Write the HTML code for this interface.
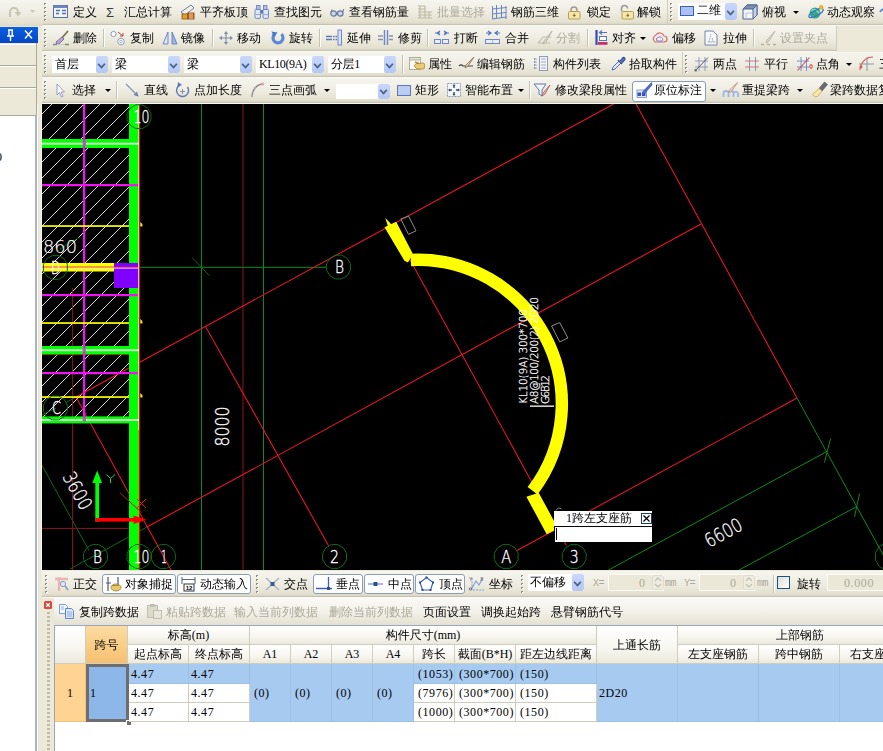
<!DOCTYPE html>
<html lang="zh-CN"><head><meta charset="utf-8"><title>梁原位标注</title>
<style>
html,body{margin:0;padding:0}
body{width:883px;height:751px;overflow:hidden;position:relative;background:#ece9d8;font-family:"Liberation Sans","WenQuanYi Zen Hei","Noto Sans CJK SC",sans-serif;font-size:12px;color:#000}
.a{position:absolute}
.tb{position:absolute;left:42px;height:24px;background:linear-gradient(#f6f5ee,#efede2 50%,#e4e1d1 90%,#dad6c5);border-bottom:1px solid #c6c3b2;box-shadow:0 1px 0 #f8f7f1,1px 0 0 #cfccbb}
.t{position:absolute;white-space:nowrap;line-height:14px;height:14px;font-size:12px}
.g{color:#aca899}
.grip{position:absolute;width:3px;height:18px;background:repeating-linear-gradient(#fff 0,#fff 1px,transparent 1px,transparent 4px),repeating-linear-gradient(#8f8d7c 0,#8f8d7c 2px,transparent 2px,transparent 4px);background-position:1px 1px,0 0;background-repeat:no-repeat;background-size:2px 100%,2px 100%}
.sep{position:absolute;width:1px;height:18px;background:#c5c2b2;box-shadow:1px 0 0 #fff}
.cb{position:absolute;background:#fff;height:17px}
.cb .t{top:1px;left:3px}
.dd{position:absolute;right:0;top:0;width:12px;height:100%;background:linear-gradient(#c9d7fb,#b4c8f6);border-radius:2px}
.dd:after{content:"";position:absolute;left:2px;top:5px;width:5px;height:5px;border-right:2px solid #4d6185;border-bottom:2px solid #4d6185;transform:rotate(45deg) scale(.8);transform-origin:50% 50%}
.short+.dd:after{top:3px}
.arr{position:absolute;width:0;height:0;border-left:3px solid transparent;border-right:3px solid transparent;border-top:3px solid #000}
.btn{position:absolute;background:#fff;border:1px solid #8a9db8;border-radius:3px;box-sizing:border-box}
svg{position:absolute;overflow:visible}
.lat{font-family:"Liberation Serif","WenQuanYi Zen Hei",serif}
.num{letter-spacing:.55px}
.mo{font-family:"Liberation Mono",monospace;font-size:10px;letter-spacing:-.4px}
.cb .lat{letter-spacing:-.4px}
</style></head><body>
<!-- toolbars -->
<div class="tb" style="left:42px;top:0px;width:625px"></div>
<div class="tb" style="left:668px;top:0px;width:215px"></div>
<div class="tb" style="left:42px;top:26px;width:794px"></div>
<div class="tb" style="left:42px;top:52px;width:640px"></div>
<div class="tb" style="left:683px;top:52px;width:200px"></div>
<div class="tb" style="left:42px;top:78px;width:841px"></div>
<i class="grip" style="left:44px;top:3px"></i>
<svg class="a" style="left:53px;top:4px" width="16" height="16" viewBox="0 0 16 16"><rect x=".5" y="1.5" width="14" height="12" fill="#eef2fb" stroke="#5b6fa3"/><rect x=".5" y="1.5" width="14" height="2.5" fill="#6f85c2"/><path d="M3 6.5h4M3 9.5h3M9 6.5h4M9 9.5h4" stroke="#5b6fa3" stroke-width="1.6" fill="none"/></svg>
<span class="t " style="left:73px;top:5px">定义</span>
<span class="t " style="left:106px;top:5px;font:13px 'Liberation Sans',sans-serif;top:5px;color:#3c3c3c">Σ</span>
<span class="t " style="left:124px;top:5px">汇总计算</span>
<svg class="a" style="left:180px;top:4px" width="16" height="16" viewBox="0 0 16 16"><path d="M1 8 L11 1 L14 4 L5 11Z" fill="#f4f0e6" stroke="#6b7fa8"/><rect x="2" y="10" width="6" height="5" fill="#e0a12c" stroke="#8a5a10" stroke-width=".8"/><rect x="8" y="9" width="6" height="6" fill="#c9722a" stroke="#7a3d10" stroke-width=".8"/><path d="M10 9v6M12 9v6" stroke="#f6d9a8" stroke-width=".8"/></svg>
<span class="t " style="left:200px;top:5px">平齐板顶</span>
<svg class="a" style="left:254px;top:4px" width="16" height="16" viewBox="0 0 16 16"><rect x="1" y="5" width="5.5" height="9.5" rx="1.5" fill="#dde6f6" stroke="#6c82b8" stroke-width=".9"/><rect x="9" y="5" width="5.5" height="9.5" rx="1.5" fill="#dde6f6" stroke="#6c82b8" stroke-width=".9"/><rect x="2.6" y="1.5" width="3.4" height="4" fill="#b4c4e6" stroke="#6c82b8" stroke-width=".9"/><rect x="9.5" y="1.5" width="3.4" height="4" fill="#b4c4e6" stroke="#6c82b8" stroke-width=".9"/><rect x="6.5" y="6" width="2.5" height="3.5" fill="#5f78b4"/><path d="M1.5 10.5h4.5M9.5 10.5h4.5" stroke="#8fa4d4" stroke-width=".9"/></svg>
<span class="t " style="left:274px;top:5px">查找图元</span>
<svg class="a" style="left:330px;top:4px" width="16" height="16" viewBox="0 0 16 16"><ellipse cx="3.6" cy="9.5" rx="2.8" ry="2.6" fill="#cdd8ee" stroke="#66789c" stroke-width="1.2"/><ellipse cx="10.2" cy="9.5" rx="2.8" ry="2.6" fill="#cdd8ee" stroke="#66789c" stroke-width="1.2"/><path d="M6.2 9q.7-.8 1.4 0M1 8 L2 5.5M12.8 8 L13.8 5" stroke="#66789c" fill="none"/></svg>
<span class="t " style="left:349px;top:5px">查看钢筋量</span>
<svg class="a" style="left:417px;top:4px" width="16" height="16" viewBox="0 0 16 16"><path d="M1 2h7M1 5h7M1 8h14M1 11h14M1 14h14M3 2v12M8 2v12M12 8v6" stroke="#bdb9a8" stroke-width="1.2" fill="none"/></svg>
<span class="t g" style="left:437px;top:5px">批量选择</span>
<svg class="a" style="left:491px;top:4px" width="16" height="16" viewBox="0 0 16 16"><path d="M1.5 2v13M5.5 1v13M10.5 1v13M15 2v13M1 5 L15.5 3.5M1 10 L15.5 8.5M1 15 L15.5 13" stroke="#6c84c4" stroke-width="1" fill="none"/></svg>
<span class="t " style="left:511px;top:5px">钢筋三维</span>
<svg class="a" style="left:567px;top:4px" width="16" height="16" viewBox="0 0 16 16"><path d="M4 8.5V6a3 3 0 0 1 6 0v2.5" fill="none" stroke="#9a9a9a" stroke-width="1.5"/><rect x="1.5" y="7.5" width="11.5" height="7.5" rx="1" fill="#f5e6ab" stroke="#b89c50"/><path d="M7.2 9.5v3.5M5.8 11.5h2.8" stroke="#8a6a20" stroke-width="1"/></svg>
<span class="t " style="left:587px;top:5px">锁定</span>
<svg class="a" style="left:619px;top:4px" width="16" height="16" viewBox="0 0 16 16"><path d="M2.5 7.5V4.5a3 3 0 0 1 6 0" fill="none" stroke="#9a9a9a" stroke-width="1.5"/><rect x="3" y="7.5" width="11.5" height="7.5" rx="1" fill="#f5e6ab" stroke="#b89c50"/><path d="M8.8 9.5v3.5M7.4 11.5h2.8" stroke="#8a6a20" stroke-width="1"/></svg>
<span class="t " style="left:637px;top:5px">解锁</span>
<i class="grip" style="left:670px;top:3px"></i>
<div class="cb" style="left:678px;top:3px;width:59px;height:17px"><svg class="a" style="left:2px;top:3px" width="14" height="10" viewBox="0 0 14 10"><rect x=".5" y=".5" width="13" height="9" fill="#a9c1f3" stroke="#3f5fb0"/></svg><span class="t" style="left:19px;top:0">二维</span><i class="dd"></i></div>
<svg class="a" style="left:742px;top:4px" width="16" height="16" viewBox="0 0 16 16"><path d="M1 5 L5 1 H15 V11 L11 15 H1Z" fill="#f3f6fb" stroke="#50648f"/><path d="M1 5 L5 1 H15 L11 5Z" fill="#7d8fb3" stroke="#50648f"/><path d="M11 5 L15 1V11L11 15Z" fill="#c3d1ec" stroke="#50648f"/><path d="M4 15V9H11" fill="none" stroke="#aab8d6" stroke-width=".8"/></svg>
<span class="t " style="left:762px;top:5px">俯视</span>
<i class="arr" style="left:793px;top:11px"></i>
<svg class="a" style="left:808px;top:4px" width="16" height="16" viewBox="0 0 16 16"><circle cx="7" cy="9" r="5.5" fill="#36a888"/><path d="M3 7q3-3 6 0t3 3" stroke="#8fe0b8" fill="none" stroke-width="1.4"/><ellipse cx="8" cy="9" rx="8" ry="2.6" fill="none" stroke="#3b6fd0" stroke-width="1.3" transform="rotate(-28 8 9)"/><circle cx="13.2" cy="3.2" r="2.2" fill="#f0b030"/></svg>
<span class="t " style="left:827px;top:5px">动态观察</span>
<svg class="a" style="left:880px;top:4px" width="16" height="16" viewBox="0 0 16 16"><path d="M0 8 Q4 2 8 8" stroke="#5c88d8" stroke-width="2" fill="none"/></svg>
<i class="grip" style="left:44px;top:29px"></i>
<svg class="a" style="left:53px;top:30px" width="16" height="16" viewBox="0 0 16 16"><path d="M15 1 L8 9" stroke="#7a6a4a" stroke-width="1.6"/><path d="M9 7 L11 9 L6 14 Q3 15 3 12Z" fill="#b9a6d8" stroke="#6a5a8a" stroke-width=".8"/><path d="M0 14.5h4M12 14.5h4" stroke="#7b8f7b" stroke-width="1.6"/><path d="M4 14.5h8" stroke="#c9c9c9" stroke-width="1"/></svg>
<span class="t " style="left:73px;top:31px">删除</span>
<i class="sep" style="left:103px;top:29px"></i>
<svg class="a" style="left:110px;top:30px" width="16" height="16" viewBox="0 0 16 16"><circle cx="3.5" cy="4" r="2.6" fill="#fff" stroke="#8a9ab8"/><circle cx="11" cy="11.5" r="3.3" fill="#fff" stroke="#8a9ab8"/><circle cx="11" cy="11.5" r="1.3" fill="none" stroke="#8a9ab8" stroke-width=".8"/><path d="M8 2 L13 6M13 6v-3M13 6h-3" stroke="#b44" stroke-width="1" fill="none"/></svg>
<span class="t " style="left:130px;top:31px">复制</span>
<svg class="a" style="left:162px;top:30px" width="16" height="16" viewBox="0 0 16 16"><path d="M6 2 L6 14 L1 14Z" fill="#dfe6f7" stroke="#6f86c8"/><path d="M10 2 L10 14 L15 14Z" fill="#9fb3e6" stroke="#6f86c8"/></svg>
<span class="t " style="left:181px;top:31px">镜像</span>
<i class="sep" style="left:212px;top:29px"></i>
<svg class="a" style="left:219px;top:31px" width="16" height="16" viewBox="0 0 16 16"><path d="M7 1v12M1 7h12" stroke="#8292ac" stroke-width="1.2" fill="none"/><path d="M7 0l-2.2 3h4.4zM7 14l-2.2-3h4.4zM0 7l3-2.2v4.4zM14 7l-3-2.2v4.4z" fill="#8292ac"/></svg>
<span class="t " style="left:237px;top:31px">移动</span>
<svg class="a" style="left:271px;top:31px" width="16" height="16" viewBox="0 0 16 16"><path d="M3.6 3.2 A5 5 0 1 0 10.4 3.2" fill="none" stroke="#5c88d8" stroke-width="3.2"/><path d="M.5 .5 L6.5 1.5 L3 6.5Z" fill="#4a78d0"/></svg>
<span class="t " style="left:289px;top:31px">旋转</span>
<i class="sep" style="left:319px;top:29px"></i>
<svg class="a" style="left:326px;top:30px" width="16" height="16" viewBox="0 0 16 16"><rect x="12" y="0" width="3.5" height="15" fill="#dbe4f7" stroke="#6f86c8"/><path d="M0 6.5h6M0 9.5h6" stroke="#5f78b4" stroke-width="1.3"/><path d="M7 6.5h4M7 9.5h4" stroke="#5f78b4" stroke-width="1.3" stroke-dasharray="1.5 1"/></svg>
<span class="t " style="left:347px;top:31px">延伸</span>
<svg class="a" style="left:378px;top:30px" width="16" height="16" viewBox="0 0 16 16"><path d="M0 6h5M0 9.5h5M11 6h4M11 9.5h4" stroke="#8a93a6" stroke-width="1.4"/><path d="M6.5 0v15M9.5 0v15" stroke="#6f86c8" stroke-width="1.4"/></svg>
<span class="t " style="left:398px;top:31px">修剪</span>
<i class="sep" style="left:427px;top:29px"></i>
<svg class="a" style="left:434px;top:30px" width="16" height="16" viewBox="0 0 16 16"><path d="M1 3h5M10 3h5M6 1l-3 2 3 2M10 1l3 2-3 2" stroke="#4f74c8" stroke-width="1.2" fill="none"/><rect x=".5" y="9.5" width="6" height="4" fill="#e8edf9" stroke="#6f86c8"/><rect x="8.5" y="9.5" width="6" height="4" fill="#e8edf9" stroke="#6f86c8"/></svg>
<span class="t " style="left:454px;top:31px">打断</span>
<svg class="a" style="left:485px;top:30px" width="16" height="16" viewBox="0 0 16 16"><path d="M1 3h4M11 3h4M3 1l3 2-3 2M13 1l-3 2 3 2" stroke="#4f74c8" stroke-width="1.2" fill="none"/><rect x=".5" y="9.5" width="14" height="4" fill="#e8edf9" stroke="#6f86c8"/><path d="M7.5 9.5v4" stroke="#6f86c8" stroke-dasharray="1 1"/></svg>
<span class="t " style="left:505px;top:31px">合并</span>
<svg class="a" style="left:537px;top:30px" width="16" height="16" viewBox="0 0 16 16"><path d="M1 13 L6 7H14M1 13h12" stroke="#bdb9a8" fill="none" stroke-width="1.1"/><path d="M15 1 L7 11 L6 14 L9 12Z" fill="#d8d5c8" stroke="#b5b1a0" stroke-width=".8"/></svg>
<span class="t g" style="left:556px;top:31px">分割</span>
<i class="sep" style="left:587px;top:29px"></i>
<svg class="a" style="left:595px;top:30px" width="16" height="16" viewBox="0 0 16 16"><path d="M1.5 0v15" stroke="#3a48a8" stroke-width="2.2"/><path d="M12 2.5H5M7 .5l-2.5 2 2.5 2" stroke="#4f74c8" stroke-width="1.2" fill="none"/><rect x="4.5" y="6.5" width="7" height="4" fill="#fff" stroke="#4f74c8"/><rect x="3" y="12" width="9.5" height="2.8" fill="#c8306a"/></svg>
<span class="t " style="left:612px;top:31px">对齐</span>
<i class="arr" style="left:640px;top:37px"></i>
<svg class="a" style="left:652px;top:30px" width="16" height="16" viewBox="0 0 16 16"><path d="M3 12 a4 4 0 0 1 1-7 a4.5 4.5 0 0 1 8 1 a3 3 0 0 1 0 6Z" fill="#fbeaea" stroke="#d46a6a" stroke-width="1.2"/><path d="M5 11 a2 2 0 0 1 1-3.4 a2.5 2.5 0 0 1 4 .6 a1.6 1.6 0 0 1 0 2.8Z" fill="none" stroke="#6f86c8" stroke-width="1"/></svg>
<span class="t " style="left:672px;top:31px">偏移</span>
<svg class="a" style="left:704px;top:30px" width="16" height="16" viewBox="0 0 16 16"><path d="M1 1h8l4 4v10H1Z" fill="#f6f8fc" stroke="#6f86a8"/><path d="M5 12l2-8M9 12l-1-5M4 12h8" stroke="#8a93a6" stroke-width=".9" fill="none" stroke-dasharray="1.5 1"/></svg>
<span class="t " style="left:723px;top:31px">拉伸</span>
<i class="sep" style="left:753px;top:29px"></i>
<svg class="a" style="left:761px;top:30px" width="16" height="16" viewBox="0 0 16 16"><path d="M14 1 L6 10 L5 13 L8 11Z" fill="#d8d5c8" stroke="#b5b1a0" stroke-width=".8"/><path d="M0 14.5h3M6 14.5h3M12 14.5h3" stroke="#b5b1a0" stroke-width="1.6"/></svg>
<span class="t g" style="left:780px;top:31px">设置夹点</span>
<i class="grip" style="left:44px;top:55px"></i>
<div class="cb" style="left:52px;top:56px;width:56px;height:17px"><span class="t ">首层</span><i class="dd"></i></div>
<div class="cb" style="left:112px;top:56px;width:68px;height:17px"><span class="t ">梁</span><i class="dd"></i></div>
<div class="cb" style="left:184px;top:56px;width:68px;height:17px"><span class="t ">梁</span><i class="dd"></i></div>
<div class="cb" style="left:256px;top:56px;width:68px;height:17px"><span class="t lat">KL10(9A)</span><i class="dd"></i></div>
<div class="cb" style="left:328px;top:56px;width:68px;height:17px"><span class="t lat">分层1</span><i class="dd"></i></div>
<i class="sep" style="left:402px;top:55px"></i>
<svg class="a" style="left:409px;top:56px" width="16" height="16" viewBox="0 0 16 16"><rect x=".5" y="1.5" width="11" height="12" fill="#fdfdfb" stroke="#b0ad9c"/><rect x=".5" y="1.5" width="11" height="2.5" fill="#e6e3d6" stroke="#b0ad9c"/><path d="M5 10 q2-4 5-2.5 l4-.5 q1.5 0 1.5 1.5 v3 q0 1.5-1.5 1.5 h-6Z" fill="#ecca72" stroke="#a88a3a" stroke-width=".8"/><path d="M10 7.5 L6 6" stroke="#a88a3a" stroke-width="1.4"/></svg>
<span class="t " style="left:428px;top:57px">属性</span>
<svg class="a" style="left:459px;top:56px" width="16" height="16" viewBox="0 0 16 16"><path d="M0 10 q2-2 4 0 h10" stroke="#444" fill="none" stroke-width="1.2"/><path d="M15 1 L7 9 L6 12 L9 10Z" fill="#e9d7b0" stroke="#7a6a4a" stroke-width=".8"/></svg>
<span class="t " style="left:477px;top:57px">编辑钢筋</span>
<svg class="a" style="left:534px;top:56px" width="16" height="16" viewBox="0 0 16 16"><rect x="5.5" y=".5" width="8" height="14" fill="#f4f6fb" stroke="#8a9ab8"/><path d="M7 3h5M7 6h5M7 9h5M7 12h5" stroke="#9aa6c0"/><path d="M0 3h3M0 6h3M0 9h3M0 12h3" stroke="#5f78b4" stroke-width="1.6" stroke-dasharray="1.5 1.2"/></svg>
<span class="t " style="left:553px;top:57px">构件列表</span>
<svg class="a" style="left:610px;top:56px" width="16" height="16" viewBox="0 0 16 16"><path d="M2 14 L3 11 L9 5 L11 7 L5 13Z" fill="#dfe8fb" stroke="#3f5fb0" stroke-width=".9"/><path d="M8 4 L12 8M10 5 L13 1.5 a1.6 1.6 0 0 1 2 2 L12 7" fill="#4f74c8" stroke="#2f4c8f" stroke-width="1.1"/></svg>
<span class="t " style="left:629px;top:57px">拾取构件</span>
<i class="grip" style="left:685px;top:55px"></i>
<svg class="a" style="left:694px;top:56px" width="16" height="16" viewBox="0 0 16 16"><path d="M1 5h13M1 11h13M5 1v14M11 1v14" stroke="#8494bc" stroke-width=".9"/><path d="M1.5 14.5 L14 1.5" stroke="#5a5a5a" stroke-width="1"/><rect x=".5" y="13" width="2.4" height="2.4" fill="#6a6a6a"/></svg>
<span class="t " style="left:713px;top:57px">两点</span>
<svg class="a" style="left:745px;top:56px" width="16" height="16" viewBox="0 0 16 16"><path d="M0 5h14M0 11h14" stroke="#d87878" stroke-width="1.1"/><path d="M4.5 1v14M10.5 1v14" stroke="#8494bc" stroke-width="1"/></svg>
<span class="t " style="left:764px;top:57px">平行</span>
<svg class="a" style="left:797px;top:56px" width="16" height="16" viewBox="0 0 16 16"><path d="M0 5h12M0 11h12M4 1v14M9.5 1v14" stroke="#6f86c8" stroke-width=".9"/><path d="M.5 14.5 L12.5 1.5" stroke="#c0504d" stroke-width="1.1"/><ellipse cx="14" cy="10.5" rx="1.3" ry="1.8" fill="none" stroke="#d9363a" stroke-width="1"/></svg>
<span class="t " style="left:816px;top:57px">点角</span>
<i class="arr" style="left:846px;top:63px"></i>
<svg class="a" style="left:859px;top:56px" width="16" height="16" viewBox="0 0 16 16"><path d="M1 14 A13 13 0 0 1 14 1" stroke="#d9534f" stroke-width="1.2" fill="none"/><path d="M0 8h15M8 1v14" stroke="#8a93a6" stroke-width="1"/><circle cx="2" cy="11" r="1.4" fill="#d9534f"/></svg>
<span class="t " style="left:879px;top:57px">三</span>
<i class="grip" style="left:44px;top:81px"></i>
<svg class="a" style="left:56px;top:83px" width="16" height="16" viewBox="0 0 16 16"><path d="M1 1 L1 12 L3.5 9.5 L5.5 14 L7 13.2 L5 9 L8.5 9Z" fill="#fff" stroke="#8a93c0" stroke-width=".9"/></svg>
<span class="t " style="left:72px;top:83px">选择</span>
<i class="arr" style="left:105px;top:89px"></i>
<i class="sep" style="left:116px;top:81px"></i>
<svg class="a" style="left:125px;top:83px" width="16" height="16" viewBox="0 0 16 16"><path d="M1 1 L13 13" stroke="#7f92b8" stroke-width="1.1"/><path d="M13.5 13.5 L8.5 12 L12 8.5Z" fill="#6f84b0"/></svg>
<span class="t " style="left:144px;top:83px">直线</span>
<svg class="a" style="left:175px;top:82px" width="16" height="16" viewBox="0 0 16 16"><path d="M12.5 5 A6 6 0 1 1 5 3" fill="none" stroke="#5f78b4" stroke-width="1.4"/><path d="M3 0 L7 3 L2.5 5Z" fill="#5f78b4"/><path d="M5 9.5h5M7.5 7v5" stroke="#8a93a6" stroke-width="1.1"/></svg>
<span class="t " style="left:194px;top:83px">点加长度</span>
<svg class="a" style="left:250px;top:82px" width="16" height="16" viewBox="0 0 16 16"><path d="M2 14 Q3 4 12 2" fill="none" stroke="#8a8a8a" stroke-width="1.3"/><circle cx="2" cy="14" r="1.2" fill="#b0b0b0"/><circle cx="5" cy="6" r="1.2" fill="#b0b0b0"/><circle cx="12.5" cy="2" r="1.6" fill="#e0a0a0"/></svg>
<span class="t " style="left:269px;top:83px">三点画弧</span>
<i class="arr" style="left:324px;top:89px"></i>
<div class="cb" style="left:336px;top:84px;width:54px;height:15px"><span class="t short"></span><i class="dd"></i></div>
<svg class="a" style="left:397px;top:85px" width="16" height="16" viewBox="0 0 16 16"><rect x=".5" y=".5" width="13" height="10" fill="#bccdf3" stroke="#5f78b4"/></svg>
<span class="t " style="left:415px;top:83px">矩形</span>
<svg class="a" style="left:447px;top:83px" width="16" height="16" viewBox="0 0 16 16"><rect x=".5" y=".5" width="13" height="13" fill="#f4f6fb" stroke="#8a9ab8" stroke-dasharray="2 1"/><path d="M7 2v3M7 9v3M2 7h3M9 7h3" stroke="#3b4a6a" stroke-width="1.4"/><path d="M7 1l-1.5 2h3zM7 13l-1.5-2h3zM1 7l2-1.5v3zM13 7l-2-1.5v3z" fill="#3b4a6a"/></svg>
<span class="t " style="left:465px;top:83px">智能布置</span>
<i class="arr" style="left:518px;top:89px"></i>
<i class="sep" style="left:529px;top:81px"></i>
<svg class="a" style="left:534px;top:82px" width="16" height="16" viewBox="0 0 16 16"><path d="M0 2h12l-4 6v6l-3-2V8Z" fill="#f4f6fb" stroke="#5f78b4" stroke-width="1"/><path d="M16 3 L9 11 L8 14 L11 12Z" fill="#e9b0b0" stroke="#a05050" stroke-width=".7"/></svg>
<span class="t " style="left:555px;top:83px">修改梁段属性</span>
<div class="btn" style="left:632px;top:81px;width:74px;height:21px"></div>
<svg class="a" style="left:636px;top:82px" width="16" height="16" viewBox="0 0 16 16"><rect x="1" y="8" width="9.5" height="7.5" fill="#dfe8fb" stroke="#6f86c8" stroke-width=".8"/><rect x="1.5" y="10.5" width="3.5" height="3.5" fill="#3a56b0"/><rect x="6" y="10.5" width="3.5" height="3.5" fill="#3a56b0"/><path d="M15.5 .5 L7 9.5 L6 12.5 L9 11 L16 3Z" fill="#4a6cd0" stroke="#2f4c9f" stroke-width=".6"/></svg>
<span class="t " style="left:654px;top:83px">原位标注</span>
<i class="arr" style="left:710px;top:89px"></i>
<svg class="a" style="left:722px;top:82px" width="16" height="16" viewBox="0 0 16 16"><path d="M1.5 15v-3.5a2.5 2.5 0 0 1 5 0v3.5M6.5 15v-3.5a2.5 2.5 0 0 1 5 0v3.5M11.5 15v-3.5a2.3 2.3 0 0 1 4.5 0v3.5" fill="none" stroke="#9ab6e6" stroke-width="1.8"/><path d="M15.5 .5 L7.5 8 L6.5 10.5 L9.5 9.5Z" fill="#ecd2c0" stroke="#b08870" stroke-width=".7"/></svg>
<span class="t " style="left:742px;top:83px">重提梁跨</span>
<i class="arr" style="left:797px;top:89px"></i>
<svg class="a" style="left:812px;top:82px" width="16" height="16" viewBox="0 0 16 16"><path d="M12.5 0 L15.5 2.5 L10 9 L7 6.5Z" fill="#6a6a78" stroke="#4a4a5a" stroke-width=".6"/><path d="M7 6.5 L10 9 L5.5 14.5 Q2 16 0.5 12.5Z" fill="#f6e9a8" stroke="#c0a850" stroke-width=".8"/></svg>
<span class="t " style="left:830px;top:83px">梁跨数据复制</span>
<!-- left panel -->
<div class="a" style="left:0;top:0;width:42px;height:26px;background:linear-gradient(#f6f5ee,#efede2 50%,#e4e1d1 90%,#dad6c5)"></div>
<svg class="a" style="left:7px;top:4px" width="30" height="16" viewBox="0 0 30 16"><path d="M3 13 V8 a4 4 0 0 1 8 0 v1" fill="none" stroke="#c9c6b6" stroke-width="2.2"/><path d="M7.5 8 L11 12.5 L14.5 8Z" fill="#c9c6b6"/><path d="M23 6h5l-2.5 3z" fill="#c9c6b6"/></svg>
<div class="a" style="left:0;top:26px;width:42px;height:725px;background:#ece9d8"></div>
<div class="a" style="left:0;top:27px;width:38px;height:16px;background:linear-gradient(#0a5fe0,#0347c8)"></div>
<svg class="a" style="left:6px;top:29px" width="28" height="12" viewBox="0 0 28 12"><path d="M2 1h5M3 1v6M6.2 1v6M1 7h7M4.5 7v5" stroke="#fff" stroke-width="1.4" fill="none"/><path d="M19 1.5 L26 9.5M26 1.5 L19 9.5" stroke="#fff" stroke-width="1.4"/></svg>
<div class="a" style="left:0;top:43px;width:36px;height:73px;background:#ece9d8"></div>
<div class="a" style="left:0;top:44px;width:36px;height:1px;background:#fff"></div>
<div class="a" style="left:0;top:65px;width:36px;height:1px;background:#aca899"></div>
<div class="a" style="left:0;top:66px;width:36px;height:1px;background:#fff"></div>
<div class="a" style="left:0;top:87px;width:36px;height:1px;background:#aca899"></div>
<div class="a" style="left:0;top:88px;width:36px;height:1px;background:#fff"></div>
<div class="a" style="left:0;top:115px;width:35px;height:636px;background:#fff;border-top:1px solid #aca899"></div>
<div class="a" style="left:36px;top:43px;width:1px;height:72px;background:#aca899"></div>
<div class="a" style="left:35px;top:115px;width:2px;height:636px;background:#a9b4c8"></div>
<span class="t lat" style="left:-4px;top:150px">0</span>
<div class="a" style="left:37px;top:104px;width:1px;height:647px;background:#fbfaf6"></div>
<div class="a" style="left:41px;top:104px;width:1px;height:467px;background:#f7f6ef"></div>
<!-- canvas -->
<svg class="a" style="left:42px;top:104px;overflow:hidden" width="841" height="466" viewBox="42 104 841 466" font-family="'DejaVu Sans','Liberation Sans',sans-serif" font-weight="200">
<defs><pattern id="hatch" patternUnits="userSpaceOnUse" x="0" y="0" width="16" height="16"><path d="M-1 13 L13 -1M11 17 L17 11" stroke="#ececec" stroke-width="0.95" fill="none"/></pattern></defs>
<rect x="42" y="104" width="841" height="466" fill="#000"/>
<rect x="42" y="104" width="87" height="313" fill="url(#hatch)"/>
<line x1="42" y1="465.4" x2="89" y2="550.5" stroke="#0a6a18" stroke-width="1" />
<line x1="147" y1="527" x2="70" y2="569" stroke="#0a6a18" stroke-width="1" />
<line x1="66" y1="402.5" x2="76" y2="397" stroke="#0a6a18" stroke-width="1" />
<line x1="42" y1="415" x2="56" y2="408" stroke="#0a6a18" stroke-width="1" />
<line x1="60" y1="249" x2="80" y2="237" stroke="#0a6a18" stroke-width="1" />
<line x1="72.6" y1="288" x2="72.6" y2="570" stroke="#8c1420" stroke-width="1" />
<line x1="243" y1="104" x2="243" y2="570" stroke="#8c1420" stroke-width="1" />
<line x1="42" y1="354.8" x2="138" y2="354.8" stroke="#8c1420" stroke-width="1" />
<line x1="42" y1="528.4" x2="140" y2="528.4" stroke="#8c1420" stroke-width="1" />
<line x1="201.5" y1="104" x2="201.5" y2="570" stroke="#0b8a1e" stroke-width="1" />
<line x1="263.5" y1="104" x2="263.5" y2="570" stroke="#0b8a1e" stroke-width="1" />
<line x1="140" y1="267.3" x2="326" y2="267.3" stroke="#0b8a1e" stroke-width="1" />
<line x1="192.5" y1="258" x2="209.4" y2="275.7" stroke="#0a6a18" stroke-width="1" />
<line x1="76" y1="397" x2="613.6" y2="104" stroke="#ee142c" stroke-width="1.05" />
<line x1="147" y1="527" x2="701" y2="224" stroke="#ee142c" stroke-width="1.05" />
<line x1="517" y1="550.5" x2="797" y2="398" stroke="#ee142c" stroke-width="1.05" />
<line x1="76" y1="397" x2="171" y2="570" stroke="#ee142c" stroke-width="1.05" />
<line x1="205.8" y1="327" x2="328.6" y2="545.7" stroke="#ee142c" stroke-width="1.05" />
<line x1="391.5" y1="226" x2="566.5" y2="545.4" stroke="#ee142c" stroke-width="1.05" />
<line x1="636" y1="104" x2="797" y2="398" stroke="#ee142c" stroke-width="1.05" />
<line x1="797" y1="398" x2="886" y2="560" stroke="#0b8a1e" stroke-width="1" />
<line x1="608.5" y1="570" x2="826" y2="452" stroke="#0b8a1e" stroke-width="1" />
<line x1="739" y1="570" x2="856.5" y2="506.7" stroke="#0b8a1e" stroke-width="1" />
<line x1="824.5" y1="462.5" x2="830.5" y2="438.5" stroke="#0b8a1e" stroke-width="1" />
<line x1="854.5" y1="517" x2="859.5" y2="493.5" stroke="#0b8a1e" stroke-width="1" />
<rect x="129" y="104" width="9.3" height="466" fill="#00ff00"/>
<rect x="42" y="139" width="87" height="9" fill="#00ff00"/>
<rect x="42" y="142.7" width="97" height="2" fill="#c9f2c9"/>
<rect x="42" y="346" width="87" height="8.399999999999977" fill="#00ff00"/>
<rect x="42" y="349.2" width="97" height="2" fill="#c9f2c9"/>
<rect x="42" y="416.4" width="87" height="7.0" fill="#00ff00"/>
<rect x="42" y="419" width="97" height="2" fill="#c9f2c9"/>
<rect x="83" y="104" width="2.2" height="315" fill="#f014f0"/>
<rect x="42" y="184" width="97" height="2.2" fill="#f014f0"/>
<rect x="42" y="294" width="97" height="2.2" fill="#f014f0"/>
<rect x="42" y="372" width="97" height="2.2" fill="#f014f0"/>
<rect x="82.5" y="141.5" width="3.5" height="4" fill="#b060b0"/>
<rect x="82.5" y="348" width="3.5" height="4" fill="#b060b0"/>
<rect x="82.5" y="417.5" width="3.5" height="4" fill="#b060b0"/>
<rect x="42" y="225.2" width="87" height="1.7" fill="#ffff00"/>
<path d="M140.2 222 L142.4 224 L142.4 226.4 L140.2 226.4Z" fill="#f4e43c"/>
<rect x="42" y="322.2" width="87" height="1.7" fill="#ffff00"/>
<path d="M140.2 319 L142.4 321 L142.4 323.4 L140.2 323.4Z" fill="#f4e43c"/>
<rect x="42" y="396.2" width="87" height="1.7" fill="#ffff00"/>
<path d="M140.2 393 L142.4 395 L142.4 397.4 L140.2 397.4Z" fill="#f4e43c"/>
<rect x="42" y="263" width="72" height="8.5" fill="#ffff00"/>
<rect x="114" y="263" width="24.5" height="25" fill="#8000ff"/>
<rect x="42" y="266.6" width="97" height="1" fill="#e01030"/>
<rect x="42" y="267.6" width="97" height="1" fill="#f8d8e8"/>
<rect x="138.2" y="104" width="1" height="326" fill="#f4f4c8"/>
<rect x="139.2" y="104" width="1" height="326" fill="#e81828"/>
<rect x="138.2" y="430" width="1.3" height="140" fill="#e0b400"/>
<rect x="139.5" y="430" width="0.7" height="140" fill="#901010"/>
<line x1="119.7" y1="492.5" x2="141.4" y2="512.5" stroke="#c81020" stroke-width="1" />
<line x1="137" y1="499" x2="146" y2="508" stroke="#ee142c" stroke-width="1" />
<line x1="146" y1="499" x2="137" y2="508" stroke="#ee142c" stroke-width="1" />
<rect x="95.3" y="482" width="3.8" height="39.5" fill="#00ff00"/>
<path d="M92.3 483 L97.2 470.5 L102 483Z" fill="#00ff00"/>
<rect x="95.3" y="518" width="39" height="3.6" fill="#ff0000"/>
<path d="M133.5 515.6 L146.5 519.8 L133.5 524Z" fill="#ff0000"/>
<path d="M106.5 474.5 L110.5 478.5 L115 474.5M110.5 478.5V483" stroke="#20d040" stroke-width="1" fill="none"/>
<polygon points="150.9,119.9 147.7,125.4 142.2,128.6 135.8,128.6 130.3,125.4 127.1,119.9 127.1,113.5 130.3,108.0 135.8,104.8 142.2,104.8 147.7,108.0 150.9,113.5" fill="none" stroke="#0c6a1c" stroke-width="1"/>
<text x="141.5" y="122.9" font-size="17" fill="#fff" stroke="#fff" stroke-width=".35" text-anchor="middle" textLength="16" lengthAdjust="spacingAndGlyphs">10</text>
<polygon points="67.3,270.7 64.1,276.2 58.6,279.4 52.2,279.4 46.7,276.2 43.5,270.7 43.5,264.3 46.7,258.8 52.2,255.6 58.6,255.6 64.1,258.8 67.3,264.3" fill="none" stroke="#0c6a1c" stroke-width="1"/>
<text x="55.4" y="273.7" font-size="17" fill="#fff" stroke="#fff" stroke-width=".35" text-anchor="middle" textLength="9" lengthAdjust="spacingAndGlyphs">D</text>
<polygon points="67.3,411.2 64.1,416.7 58.6,419.9 52.2,419.9 46.7,416.7 43.5,411.2 43.5,404.8 46.7,399.3 52.2,396.1 58.6,396.1 64.1,399.3 67.3,404.8" fill="none" stroke="#0c6a1c" stroke-width="1"/>
<text x="56.4" y="414.2" font-size="17" fill="#fff" stroke="#fff" stroke-width=".35" text-anchor="middle" textLength="9" lengthAdjust="spacingAndGlyphs">C</text>
<polygon points="350.4,270.2 347.2,275.7 341.7,278.9 335.3,278.9 329.8,275.7 326.6,270.2 326.6,263.8 329.8,258.3 335.3,255.1 341.7,255.1 347.2,258.3 350.4,263.8" fill="none" stroke="#0c6a1c" stroke-width="1"/>
<text x="339.5" y="273.2" font-size="17" fill="#fff" stroke="#fff" stroke-width=".35" text-anchor="middle" textLength="9" lengthAdjust="spacingAndGlyphs">B</text>
<polygon points="107.4,559.7 104.2,565.2 98.7,568.4 92.3,568.4 86.8,565.2 83.6,559.7 83.6,553.3 86.8,547.8 92.3,544.6 98.7,544.6 104.2,547.8 107.4,553.3" fill="none" stroke="#0c6a1c" stroke-width="1"/>
<text x="97.5" y="562.7" font-size="17" fill="#fff" stroke="#fff" stroke-width=".35" text-anchor="middle" textLength="9" lengthAdjust="spacingAndGlyphs">B</text>
<polygon points="150.9,559.7 147.7,565.2 142.2,568.4 135.8,568.4 130.3,565.2 127.1,559.7 127.1,553.3 130.3,547.8 135.8,544.6 142.2,544.6 147.7,547.8 150.9,553.3" fill="none" stroke="#0c6a1c" stroke-width="1"/>
<text x="141.5" y="562.7" font-size="17" fill="#fff" stroke="#fff" stroke-width=".35" text-anchor="middle" textLength="16" lengthAdjust="spacingAndGlyphs">10</text>
<polygon points="175.3,559.7 172.1,565.2 166.6,568.4 160.2,568.4 154.7,565.2 151.5,559.7 151.5,553.3 154.7,547.8 160.2,544.6 166.6,544.6 172.1,547.8 175.3,553.3" fill="none" stroke="#0c6a1c" stroke-width="1"/>
<text x="163.9" y="562.7" font-size="17" fill="#fff" stroke="#fff" stroke-width=".35" text-anchor="middle" textLength="6" lengthAdjust="spacingAndGlyphs">1</text>
<polygon points="346.5,559.7 343.3,565.2 337.8,568.4 331.4,568.4 325.9,565.2 322.7,559.7 322.7,553.3 325.9,547.8 331.4,544.6 337.8,544.6 343.3,547.8 346.5,553.3" fill="none" stroke="#0c6a1c" stroke-width="1"/>
<text x="334.6" y="562.7" font-size="17" fill="#fff" stroke="#fff" stroke-width=".35" text-anchor="middle" textLength="9" lengthAdjust="spacingAndGlyphs">2</text>
<polygon points="518.1,559.7 514.9,565.2 509.4,568.4 503.0,568.4 497.5,565.2 494.3,559.7 494.3,553.3 497.5,547.8 503.0,544.6 509.4,544.6 514.9,547.8 518.1,553.3" fill="none" stroke="#0c6a1c" stroke-width="1"/>
<text x="506.2" y="562.7" font-size="17" fill="#fff" stroke="#fff" stroke-width=".35" text-anchor="middle" textLength="10" lengthAdjust="spacingAndGlyphs">A</text>
<polygon points="586.1,559.7 582.9,565.2 577.4,568.4 571.0,568.4 565.5,565.2 562.3,559.7 562.3,553.3 565.5,547.8 571.0,544.6 577.4,544.6 582.9,547.8 586.1,553.3" fill="none" stroke="#0c6a1c" stroke-width="1"/>
<text x="574.2" y="562.7" font-size="17" fill="#fff" stroke="#fff" stroke-width=".35" text-anchor="middle" textLength="9" lengthAdjust="spacingAndGlyphs">3</text>
<polygon points="902.5,560.1 898.9,566.4 892.6,570.0 885.4,570.0 879.1,566.4 875.5,560.1 875.5,552.9 879.1,546.6 885.4,543.0 892.6,543.0 898.9,546.6 902.5,552.9" fill="none" stroke="#0c6a1c" stroke-width="1"/>
<text x="889" y="562.7" font-size="17" fill="#fff" stroke="#fff" stroke-width=".35" text-anchor="middle"></text>
<text x="43" y="253" font-size="18.5" fill="#fff" stroke="#fff" stroke-width=".15" textLength="34" lengthAdjust="spacingAndGlyphs">860</text>
<text transform="translate(228.5,446.5) rotate(-90)" font-size="19" fill="#fff" stroke="#fff" stroke-width=".3" textLength="40" lengthAdjust="spacingAndGlyphs">8000</text>
<text transform="translate(62,476.5) rotate(61)" font-size="19" fill="#fff" stroke="#fff" stroke-width=".3" textLength="40" lengthAdjust="spacingAndGlyphs">3600</text>
<text transform="translate(709,548) rotate(-28.6)" font-size="19" fill="#fff" stroke="#fff" stroke-width=".3" textLength="40" lengthAdjust="spacingAndGlyphs">6600</text>
<path d="M384.5 227.2 L396.2 221.7 L412.9 254 L408 262.5 L404.4 260.7Z" fill="#ffff00"/>
<path d="M385.2 217.8 L391.5 224.5 L388 226.5Z" fill="#ffff00"/>
<path d="M410.8 260 A144 144 0 0 1 532.6 490.8" fill="none" stroke="#ffff00" stroke-width="12.4"/>
<path d="M526.4 496.7 L538.7 492.7 L558 528.4 L546.7 534.3Z" fill="#ffff00"/>
<path d="M400.8 219 L408.5 216 L416 230.8 L408.5 234.4Z" fill="none" stroke="#8c8c8c" stroke-width="1"/>
<path d="M551.6 326 L559.7 322.5 L567.9 338 L559.7 341.9Z" fill="none" stroke="#8c8c8c" stroke-width="1"/>
<path d="M556 510.5 q2.5-4 5.5-1.5" fill="none" stroke="#8c8c8c" stroke-width="1"/>
<text transform="translate(527,404) rotate(-90)" font-size="10.5" fill="#fff" stroke="#fff" stroke-width=".25" textLength="95" lengthAdjust="spacing">KL10(9A) 300*700</text>
<text transform="translate(538,404) rotate(-90)" font-size="10.5" fill="#fff" stroke="#fff" stroke-width=".25" textLength="107" lengthAdjust="spacing">A8@100/200(2) 2D20</text>
<text transform="translate(549,404) rotate(-90)" font-size="10.5" fill="#fff" stroke="#fff" stroke-width=".25" textLength="29" lengthAdjust="spacing">G6B12</text>
<rect x="530" y="405.5" width="24" height="1.3" fill="#fff"/>
</svg>
<div class="a" style="left:554px;top:511px;width:98px;height:15px;background:#fff"></div>
<span class="t" style="left:566px;top:511px"><span class="lat">1</span>跨左支座筋</span>
<svg class="a" style="left:641px;top:513px" width="11" height="11" viewBox="0 0 11 11"><rect x=".5" y=".5" width="10" height="10" fill="#fff" stroke="#1a3a6a"/><path d="M2.5 2.5 L8.5 8.5M8.5 2.5 L2.5 8.5" stroke="#000" stroke-width="1.3"/></svg>
<div class="a" style="left:554px;top:526px;width:98px;height:16px;background:#fff;box-sizing:border-box;border-top:1px solid #000;border-left:1px solid #000"></div>
<div class="a" style="left:556px;top:528px;width:1px;height:12px;background:#000"></div>
<!-- snap bar -->
<div class="tb" style="left:42px;top:571px;width:841px;height:25px"></div>
<i class="grip" style="left:45px;top:575px"></i>
<svg class="a" style="left:54px;top:576px" width="16" height="16" viewBox="0 0 16 16"><path d="M1 3h13M5 1v14" stroke="#e9b4b4" stroke-width="2.4" fill="none"/><circle cx="9" cy="8" r="2.6" fill="#dfe8fb" stroke="#8a9ab8"/><path d="M11 10l3 4" stroke="#8a9ab8" stroke-width="1.6"/></svg>
<span class="t" style="left:73px;top:577px">正交</span>
<div class="btn" style="left:102px;top:574px;width:74px;height:20px"></div>
<svg class="a" style="left:106px;top:576px" width="16" height="16" viewBox="0 0 16 16"><path d="M2 1v14M12 1v10M0 7h5" stroke="#4a5a7a" stroke-width="1.2"/><ellipse cx="10" cy="11.5" rx="5" ry="3.5" fill="#e9c870" stroke="#9a7a2a" stroke-width=".8"/><path d="M6 9.5h7" stroke="#9a7a2a" stroke-width=".8"/></svg>
<span class="t" style="left:125px;top:577px">对象捕捉</span>
<div class="btn" style="left:177px;top:574px;width:74px;height:20px"></div>
<svg class="a" style="left:181px;top:576px" width="16" height="16" viewBox="0 0 16 16"><path d="M1 1v7M14 1v7M1 3.5h13" stroke="#5a6a8a" stroke-width="1.1" fill="none"/><rect x="3" y="8" width="10" height="7" fill="#fff" stroke="#333" stroke-width="1"/><text x="8" y="14" font-size="6" font-family="Liberation Sans,sans-serif" font-weight="bold" text-anchor="middle" fill="#000">12</text></svg>
<span class="t" style="left:200px;top:577px">动态输入</span>
<i class="grip" style="left:256px;top:575px"></i>
<svg class="a" style="left:265px;top:576px" width="16" height="16" viewBox="0 0 16 16"><path d="M1 2 L14 14M14 2 L1 14" stroke="#9fb0cc" stroke-width="1.2"/><rect x="5.5" y="6" width="4" height="4" fill="#3f5888"/></svg>
<span class="t" style="left:284px;top:577px">交点</span>
<div class="btn" style="left:313px;top:574px;width:50px;height:20px"></div>
<svg class="a" style="left:316px;top:576px" width="17" height="16" viewBox="0 0 17 16"><path d="M0 12.5h16M12.5 1v13" stroke="#3f5fc0" stroke-width="1.3"/><rect x="11" y="11" width="3" height="3" fill="#2f4c8f"/></svg>
<span class="t" style="left:336px;top:577px">垂点</span>
<div class="btn" style="left:364px;top:574px;width:50px;height:20px"></div>
<svg class="a" style="left:368px;top:576px" width="16" height="16" viewBox="0 0 16 16"><path d="M0 8h15" stroke="#6f8fd8" stroke-width="1.3"/><rect x="5.5" y="6" width="4" height="4" fill="#2f4c8f"/></svg>
<span class="t" style="left:388px;top:577px">中点</span>
<div class="btn" style="left:415px;top:574px;width:50px;height:20px"></div>
<svg class="a" style="left:419px;top:576px" width="16" height="16" viewBox="0 0 16 16"><path d="M7.5 1.5 L14 6.5 L11.5 14 H3.5 L1 6.5Z" fill="#fff" stroke="#3f5fc0" stroke-width="1.2"/><g fill="#2f4c8f"><rect x="6.5" y=".5" width="2" height="2"/><rect x="13" y="5.5" width="2" height="2"/><rect x="10.5" y="13" width="2" height="2"/><rect x="2.5" y="13" width="2" height="2"/><rect x="0" y="5.5" width="2" height="2"/></g></svg>
<span class="t" style="left:439px;top:577px">顶点</span>
<svg class="a" style="left:469px;top:576px" width="16" height="16" viewBox="0 0 16 16"><path d="M3 2v12h12" stroke="#7f9fd8" stroke-width="1.1" fill="none" stroke-dasharray="2 1.2"/><path d="M3 12 L7 5 L10 9 L14 2" stroke="#7f9fd8" stroke-width="1.2" fill="none"/><text x="0" y="5" font-size="5" fill="#445" font-family="Liberation Sans,sans-serif">Y</text><text x="11" y="5" font-size="5" fill="#445" font-family="Liberation Sans,sans-serif">X</text><circle cx="1.5" cy="13" r="1.2" fill="none" stroke="#445" stroke-width=".7"/></svg>
<span class="t" style="left:489px;top:577px">坐标</span>
<i class="grip" style="left:521px;top:575px"></i>
<div class="cb" style="left:528px;top:574px;width:56px;height:17px"><span class="t" style="left:2px;top:1px">不偏移</span><i class="dd"></i></div>
<span class="t g mo" style="left:593px;top:577px">X=</span>
<div class="a" style="left:608px;top:574px;width:56px;height:17px;box-sizing:border-box;border:1px solid #fbfaf6;background:#ebe8d7"></div>
<span class="t g lat" style="left:639px;top:576px">0</span>
<svg class="a" style="left:652px;top:575px" width="12" height="15" viewBox="0 0 12 15"><rect x=".5" y=".5" width="11" height="14" rx="2" fill="#efede2" stroke="#dedbcb"/><path d="M3 6l3-3 3 3M3 9l3 3 3-3" stroke="#c4c1b0" stroke-width="1.4" fill="none"/></svg>
<span class="t g mo" style="left:665px;top:577px">mm</span>
<span class="t g mo" style="left:684px;top:577px">Y=</span>
<div class="a" style="left:699px;top:574px;width:56px;height:17px;box-sizing:border-box;border:1px solid #fbfaf6;background:#ebe8d7"></div>
<span class="t g lat" style="left:730px;top:576px">0</span>
<svg class="a" style="left:743px;top:575px" width="12" height="15" viewBox="0 0 12 15"><rect x=".5" y=".5" width="11" height="14" rx="2" fill="#efede2" stroke="#dedbcb"/><path d="M3 6l3-3 3 3M3 9l3 3 3-3" stroke="#c4c1b0" stroke-width="1.4" fill="none"/></svg>
<span class="t g mo" style="left:757px;top:577px">mm</span>
<i class="sep" style="left:773px;top:575px"></i>
<div class="a" style="left:777px;top:576px;width:13px;height:13px;box-sizing:border-box;border:1px solid #1c5180;background:linear-gradient(135deg,#dcdcd7,#fff)"></div>
<span class="t" style="left:797px;top:577px">旋转</span>
<div class="a" style="left:827px;top:574px;width:60px;height:17px;box-sizing:border-box;border:1px solid #fbfaf6;background:#ebe8d7"></div>
<span class="t g lat" style="left:844px;top:576px;letter-spacing:.6px">0.000</span>
<!-- bottom panel -->
<div class="a" style="left:42px;top:597px;width:841px;height:154px;background:#ece9d8;border-top:1px solid #fbfaf6"></div>
<div class="a" style="left:54px;top:598px;width:829px;height:27px;background:linear-gradient(#fbfaf7,#f3f1e9 50%,#e4e1d2)"></div>
<svg class="a" style="left:44px;top:601px" width="8" height="8" viewBox="0 0 8 8"><rect width="8" height="8" rx="1.5" fill="#d9463a"/><path d="M2.2 2.2 L5.8 5.8M5.8 2.2 L2.2 5.8" stroke="#fff" stroke-width="1.3"/></svg>
<div class="a" style="left:47px;top:612px;width:3px;height:139px;background:repeating-linear-gradient(#8f8d7c 0,#8f8d7c 2px,transparent 2px,transparent 4px);opacity:.5"></div>
<svg class="a" style="left:59px;top:604px" width="16" height="15" viewBox="0 0 16 15"><path d="M.5 .5h6l2 2v7h-8z" fill="#f4f8ff" stroke="#7f9fd0"/><path d="M6.5 4.5h6l2 2v8h-8z" fill="#dbe8fb" stroke="#5f86c8"/><path d="M8 8h5M8 10h5M8 12h5M2 3h3M2 5h3" stroke="#7f9fd0" stroke-width=".8"/></svg>
<span class="t " style="left:79px;top:605px">复制跨数据</span>
<svg class="a" style="left:147px;top:604px" width="16" height="15" viewBox="0 0 16 15"><rect x=".5" y="1.5" width="10" height="12" fill="#dcdacd" stroke="#c2bfae"/><rect x="3" y="0" width="5" height="3" fill="#c2bfae"/><rect x="6.5" y="6.5" width="8" height="8" fill="#e9e7dc" stroke="#c2bfae"/></svg>
<span class="t g" style="left:166px;top:605px">粘贴跨数据</span>
<span class="t g" style="left:234px;top:605px">输入当前列数据</span>
<span class="t g" style="left:329px;top:605px">删除当前列数据</span>
<span class="t " style="left:423px;top:605px">页面设置</span>
<span class="t " style="left:481px;top:605px">调换起始跨</span>
<span class="t " style="left:551px;top:605px">悬臂钢筋代号</span>
<div class="a" style="left:54px;top:625px;width:829px;height:126px;background:#fff;border-top:1px solid #9aa7bd;border-left:1px solid #9aa7bd"></div>
<div class="a " style="left:55px;top:626px;width:31px;height:38px;background:linear-gradient(#ffffff,#f7f6f0 60%,#ebe9dd);box-sizing:border-box;border-right:1px solid #d0cdbd;border-bottom:1px solid #d0cdbd;line-height:38px;text-align:center;white-space:nowrap;overflow:hidden"></div>
<div class="a " style="left:86px;top:626px;width:42px;height:38px;background:linear-gradient(#fbdba4,#f9cd84 55%,#f6c071);box-sizing:border-box;border-right:1px solid #d0cdbd;border-bottom:1px solid #d0cdbd;line-height:38px;text-align:center;white-space:nowrap;overflow:hidden">跨号</div>
<div class="a " style="left:128px;top:626px;width:122px;height:19px;background:linear-gradient(#ffffff,#f7f6f0 60%,#ebe9dd);box-sizing:border-box;border-right:1px solid #d0cdbd;border-bottom:1px solid #d0cdbd;line-height:19px;text-align:center;white-space:nowrap;overflow:hidden">标高<span class="lat">(m)</span></div>
<div class="a " style="left:128px;top:645px;width:61px;height:19px;background:linear-gradient(#ffffff,#f7f6f0 60%,#ebe9dd);box-sizing:border-box;border-right:1px solid #d0cdbd;border-bottom:1px solid #d0cdbd;line-height:19px;text-align:center;white-space:nowrap;overflow:hidden">起点标高</div>
<div class="a " style="left:189px;top:645px;width:61px;height:19px;background:linear-gradient(#ffffff,#f7f6f0 60%,#ebe9dd);box-sizing:border-box;border-right:1px solid #d0cdbd;border-bottom:1px solid #d0cdbd;line-height:19px;text-align:center;white-space:nowrap;overflow:hidden">终点标高</div>
<div class="a " style="left:250px;top:626px;width:347px;height:19px;background:linear-gradient(#ffffff,#f7f6f0 60%,#ebe9dd);box-sizing:border-box;border-right:1px solid #d0cdbd;border-bottom:1px solid #d0cdbd;line-height:19px;text-align:center;white-space:nowrap;overflow:hidden">构件尺寸<span class="lat">(mm)</span></div>
<div class="a lat" style="left:250px;top:645px;width:41px;height:19px;background:linear-gradient(#ffffff,#f7f6f0 60%,#ebe9dd);box-sizing:border-box;border-right:1px solid #d0cdbd;border-bottom:1px solid #d0cdbd;line-height:19px;text-align:center;white-space:nowrap;overflow:hidden">A1</div>
<div class="a lat" style="left:291px;top:645px;width:41px;height:19px;background:linear-gradient(#ffffff,#f7f6f0 60%,#ebe9dd);box-sizing:border-box;border-right:1px solid #d0cdbd;border-bottom:1px solid #d0cdbd;line-height:19px;text-align:center;white-space:nowrap;overflow:hidden">A2</div>
<div class="a lat" style="left:332px;top:645px;width:41px;height:19px;background:linear-gradient(#ffffff,#f7f6f0 60%,#ebe9dd);box-sizing:border-box;border-right:1px solid #d0cdbd;border-bottom:1px solid #d0cdbd;line-height:19px;text-align:center;white-space:nowrap;overflow:hidden">A3</div>
<div class="a lat" style="left:373px;top:645px;width:41px;height:19px;background:linear-gradient(#ffffff,#f7f6f0 60%,#ebe9dd);box-sizing:border-box;border-right:1px solid #d0cdbd;border-bottom:1px solid #d0cdbd;line-height:19px;text-align:center;white-space:nowrap;overflow:hidden">A4</div>
<div class="a " style="left:414px;top:645px;width:41px;height:19px;background:linear-gradient(#ffffff,#f7f6f0 60%,#ebe9dd);box-sizing:border-box;border-right:1px solid #d0cdbd;border-bottom:1px solid #d0cdbd;line-height:19px;text-align:center;white-space:nowrap;overflow:hidden">跨长</div>
<div class="a " style="left:455px;top:645px;width:61px;height:19px;background:linear-gradient(#ffffff,#f7f6f0 60%,#ebe9dd);box-sizing:border-box;border-right:1px solid #d0cdbd;border-bottom:1px solid #d0cdbd;line-height:19px;text-align:center;white-space:nowrap;overflow:hidden">截面<span class="lat">(B*H)</span></div>
<div class="a " style="left:516px;top:645px;width:81px;height:19px;background:linear-gradient(#ffffff,#f7f6f0 60%,#ebe9dd);box-sizing:border-box;border-right:1px solid #d0cdbd;border-bottom:1px solid #d0cdbd;line-height:19px;text-align:center;white-space:nowrap;overflow:hidden">距左边线距离</div>
<div class="a " style="left:597px;top:626px;width:81px;height:38px;background:linear-gradient(#ffffff,#f7f6f0 60%,#ebe9dd);box-sizing:border-box;border-right:1px solid #d0cdbd;border-bottom:1px solid #d0cdbd;line-height:38px;text-align:center;white-space:nowrap;overflow:hidden">上通长筋</div>
<div class="a " style="left:678px;top:626px;width:243px;height:19px;background:linear-gradient(#ffffff,#f7f6f0 60%,#ebe9dd);box-sizing:border-box;border-right:1px solid #d0cdbd;border-bottom:1px solid #d0cdbd;line-height:19px;text-align:left;white-space:nowrap;overflow:hidden;padding-left:98px">上部钢筋</div>
<div class="a " style="left:678px;top:645px;width:81px;height:19px;background:linear-gradient(#ffffff,#f7f6f0 60%,#ebe9dd);box-sizing:border-box;border-right:1px solid #d0cdbd;border-bottom:1px solid #d0cdbd;line-height:19px;text-align:center;white-space:nowrap;overflow:hidden">左支座钢筋</div>
<div class="a " style="left:759px;top:645px;width:81px;height:19px;background:linear-gradient(#ffffff,#f7f6f0 60%,#ebe9dd);box-sizing:border-box;border-right:1px solid #d0cdbd;border-bottom:1px solid #d0cdbd;line-height:19px;text-align:center;white-space:nowrap;overflow:hidden">跨中钢筋</div>
<div class="a " style="left:840px;top:645px;width:81px;height:19px;background:linear-gradient(#ffffff,#f7f6f0 60%,#ebe9dd);box-sizing:border-box;border-right:1px solid #d0cdbd;border-bottom:1px solid #d0cdbd;line-height:19px;text-align:left;white-space:nowrap;overflow:hidden;padding-left:10px">右支座钢筋</div>
<div class="a lat" style="left:55px;top:664px;width:31px;height:58px;background:#ffd391;box-sizing:border-box;border-right:1px solid #f0c27c;border-bottom:1px solid #f0c27c;line-height:58px;text-align:center;white-space:nowrap;overflow:hidden">1</div>
<div class="a lat" style="left:86px;top:664px;width:43px;height:58px;box-sizing:border-box;border:3px solid #6e6e6e;background:#8db6e9;line-height:52px;padding-left:1px">1</div>
<div class="a" style="left:127px;top:721px;width:4px;height:4px;background:#6e6e6e;border:1px solid #fff;box-sizing:content-box;margin:-1px"></div>
<div class="a lat num" style="left:129px;top:664px;width:60px;height:20px;background:#a6caf0;box-sizing:border-box;border-right:1px solid #9cbfe4;border-bottom:1px solid #9cbfe4;line-height:20px;text-align:left;white-space:nowrap;overflow:hidden;padding-left:2px">4.47</div>
<div class="a lat num" style="left:189px;top:664px;width:61px;height:20px;background:#a6caf0;box-sizing:border-box;border-right:1px solid #9cbfe4;border-bottom:1px solid #9cbfe4;line-height:20px;text-align:left;white-space:nowrap;overflow:hidden;padding-left:2px">4.47</div>
<div class="a lat num" style="left:129px;top:684px;width:60px;height:19px;background:#fff;box-sizing:border-box;border-right:1px solid #d0cdbd;border-bottom:1px solid #d0cdbd;line-height:19px;text-align:left;white-space:nowrap;overflow:hidden;padding-left:2px">4.47</div>
<div class="a lat num" style="left:189px;top:684px;width:61px;height:19px;background:#fff;box-sizing:border-box;border-right:1px solid #d0cdbd;border-bottom:1px solid #d0cdbd;line-height:19px;text-align:left;white-space:nowrap;overflow:hidden;padding-left:2px">4.47</div>
<div class="a lat num" style="left:129px;top:703px;width:60px;height:19px;background:#fff;box-sizing:border-box;border-right:1px solid #d0cdbd;border-bottom:1px solid #d0cdbd;line-height:19px;text-align:left;white-space:nowrap;overflow:hidden;padding-left:2px">4.47</div>
<div class="a lat num" style="left:189px;top:703px;width:61px;height:19px;background:#fff;box-sizing:border-box;border-right:1px solid #d0cdbd;border-bottom:1px solid #d0cdbd;line-height:19px;text-align:left;white-space:nowrap;overflow:hidden;padding-left:2px">4.47</div>
<div class="a lat num" style="left:250px;top:664px;width:41px;height:58px;background:#a6caf0;box-sizing:border-box;border-right:1px solid #9cbfe4;border-bottom:1px solid #9cbfe4;line-height:58px;text-align:left;white-space:nowrap;overflow:hidden;padding-left:4px">(0)</div>
<div class="a lat num" style="left:291px;top:664px;width:41px;height:58px;background:#a6caf0;box-sizing:border-box;border-right:1px solid #9cbfe4;border-bottom:1px solid #9cbfe4;line-height:58px;text-align:left;white-space:nowrap;overflow:hidden;padding-left:4px">(0)</div>
<div class="a lat num" style="left:332px;top:664px;width:41px;height:58px;background:#a6caf0;box-sizing:border-box;border-right:1px solid #9cbfe4;border-bottom:1px solid #9cbfe4;line-height:58px;text-align:left;white-space:nowrap;overflow:hidden;padding-left:4px">(0)</div>
<div class="a lat num" style="left:373px;top:664px;width:41px;height:58px;background:#a6caf0;box-sizing:border-box;border-right:1px solid #9cbfe4;border-bottom:1px solid #9cbfe4;line-height:58px;text-align:left;white-space:nowrap;overflow:hidden;padding-left:4px">(0)</div>
<div class="a lat num" style="left:414px;top:664px;width:41px;height:20px;background:#a6caf0;box-sizing:border-box;border-right:1px solid #9cbfe4;border-bottom:1px solid #9cbfe4;line-height:20px;text-align:left;white-space:nowrap;overflow:hidden;padding-left:4px">(1053)</div>
<div class="a lat num" style="left:455px;top:664px;width:61px;height:20px;background:#a6caf0;box-sizing:border-box;border-right:1px solid #9cbfe4;border-bottom:1px solid #9cbfe4;line-height:20px;text-align:left;white-space:nowrap;overflow:hidden;padding-left:4px">(300*700)</div>
<div class="a lat num" style="left:516px;top:664px;width:81px;height:20px;background:#a6caf0;box-sizing:border-box;border-right:1px solid #9cbfe4;border-bottom:1px solid #9cbfe4;line-height:20px;text-align:left;white-space:nowrap;overflow:hidden;padding-left:4px">(150)</div>
<div class="a lat num" style="left:414px;top:684px;width:41px;height:19px;background:#fff;box-sizing:border-box;border-right:1px solid #d0cdbd;border-bottom:1px solid #d0cdbd;line-height:19px;text-align:left;white-space:nowrap;overflow:hidden;padding-left:4px">(7976)</div>
<div class="a lat num" style="left:455px;top:684px;width:61px;height:19px;background:#fff;box-sizing:border-box;border-right:1px solid #d0cdbd;border-bottom:1px solid #d0cdbd;line-height:19px;text-align:left;white-space:nowrap;overflow:hidden;padding-left:4px">(300*700)</div>
<div class="a lat num" style="left:516px;top:684px;width:81px;height:19px;background:#fff;box-sizing:border-box;border-right:1px solid #d0cdbd;border-bottom:1px solid #d0cdbd;line-height:19px;text-align:left;white-space:nowrap;overflow:hidden;padding-left:4px">(150)</div>
<div class="a lat num" style="left:414px;top:703px;width:41px;height:19px;background:#fff;box-sizing:border-box;border-right:1px solid #d0cdbd;border-bottom:1px solid #d0cdbd;line-height:19px;text-align:left;white-space:nowrap;overflow:hidden;padding-left:4px">(1000)</div>
<div class="a lat num" style="left:455px;top:703px;width:61px;height:19px;background:#fff;box-sizing:border-box;border-right:1px solid #d0cdbd;border-bottom:1px solid #d0cdbd;line-height:19px;text-align:left;white-space:nowrap;overflow:hidden;padding-left:4px">(300*700)</div>
<div class="a lat num" style="left:516px;top:703px;width:81px;height:19px;background:#fff;box-sizing:border-box;border-right:1px solid #d0cdbd;border-bottom:1px solid #d0cdbd;line-height:19px;text-align:left;white-space:nowrap;overflow:hidden;padding-left:4px">(150)</div>
<div class="a lat num" style="left:597px;top:664px;width:81px;height:58px;background:#a6caf0;box-sizing:border-box;border-right:1px solid #9cbfe4;border-bottom:1px solid #9cbfe4;line-height:58px;text-align:left;white-space:nowrap;overflow:hidden;padding-left:2px">2D20</div>
<div class="a " style="left:678px;top:664px;width:81px;height:58px;background:#a6caf0;box-sizing:border-box;border-right:1px solid #9cbfe4;border-bottom:1px solid #9cbfe4;line-height:58px;text-align:center;white-space:nowrap;overflow:hidden"></div>
<div class="a " style="left:759px;top:664px;width:81px;height:58px;background:#a6caf0;box-sizing:border-box;border-right:1px solid #9cbfe4;border-bottom:1px solid #9cbfe4;line-height:58px;text-align:center;white-space:nowrap;overflow:hidden"></div>
<div class="a " style="left:840px;top:664px;width:81px;height:58px;background:#a6caf0;box-sizing:border-box;border-right:1px solid #9cbfe4;border-bottom:1px solid #9cbfe4;line-height:58px;text-align:center;white-space:nowrap;overflow:hidden"></div>

</body></html>
